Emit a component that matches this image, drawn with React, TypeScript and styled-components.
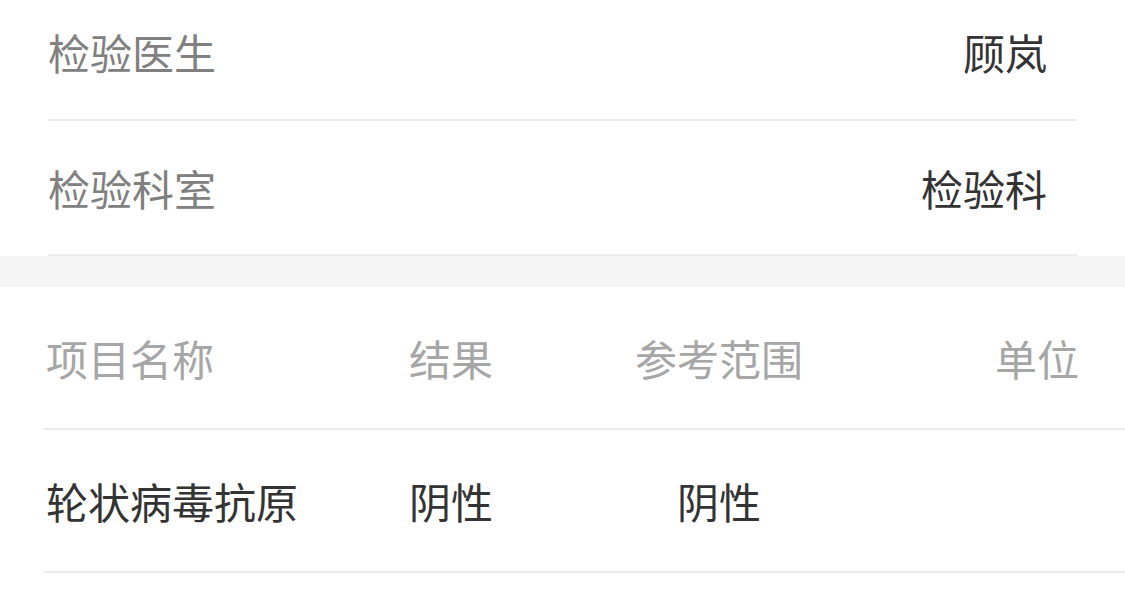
import React from 'react';
import styled, { createGlobalStyle } from 'styled-components';

const GlobalStyle = createGlobalStyle`
  body {
    margin: 0;
    background: #fff;
    overflow: hidden;
    font-family: "Noto Sans CJK SC", "Noto Sans", sans-serif;
  }
`;

const Page = styled.div`
  margin-top: -16px;
`;

const InfoList = styled.div`
  background: #fff;
`;

const InfoRow = styled.div`
  display: flex;
  align-items: center;
  justify-content: space-between;
  height: 133px;
  margin: 0 48px;
  padding-right: 30px;
  border-bottom: 2px solid #ececec;
  font-size: 42px;
  &:first-child {
    height: 135px;
  }
`;

const Label = styled.span`
  color: #808080;
`;

const Value = styled.span`
  color: #333;
`;

const Gap = styled.div`
  height: 31px;
  background: #f5f5f5;
`;

const TableRow = styled.div<{ header?: boolean }>`
  display: grid;
  grid-template-columns: 363px 180px 260px 1fr;
  align-items: center;
  height: 141px;
  margin-left: 44px;
  padding-left: 2px;
  border-bottom: 2px solid #ececec;
  font-size: 42px;
  color: ${(p) => (p.header ? '#a6a6a6' : '#333')};
`;

const Cell = styled.span<{ align?: 'left' | 'center' | 'right' }>`
  text-align: ${(p) => p.align || 'left'};
  padding-right: ${(p) => (p.align === 'right' ? '46px' : '0')};
  white-space: nowrap;
`;

const info = [
  { label: '检验医生', value: '顾岚' },
  { label: '检验科室', value: '检验科' },
];

const results = [{ name: '轮状病毒抗原', result: '阴性', range: '阴性', unit: '' }];

export default function App() {
  return (
    <Page>
      <GlobalStyle />
      <InfoList>
        {info.map((row) => (
          <InfoRow key={row.label}>
            <Label>{row.label}</Label>
            <Value>{row.value}</Value>
          </InfoRow>
        ))}
      </InfoList>
      <Gap />
      <TableRow header>
        <Cell>项目名称</Cell>
        <Cell>结果</Cell>
        <Cell align="center">参考范围</Cell>
        <Cell align="right">单位</Cell>
      </TableRow>
      {results.map((r) => (
        <TableRow key={r.name}>
          <Cell>{r.name}</Cell>
          <Cell>{r.result}</Cell>
          <Cell align="center">{r.range}</Cell>
          <Cell align="right">{r.unit}</Cell>
        </TableRow>
      ))}
    </Page>
  );
}
